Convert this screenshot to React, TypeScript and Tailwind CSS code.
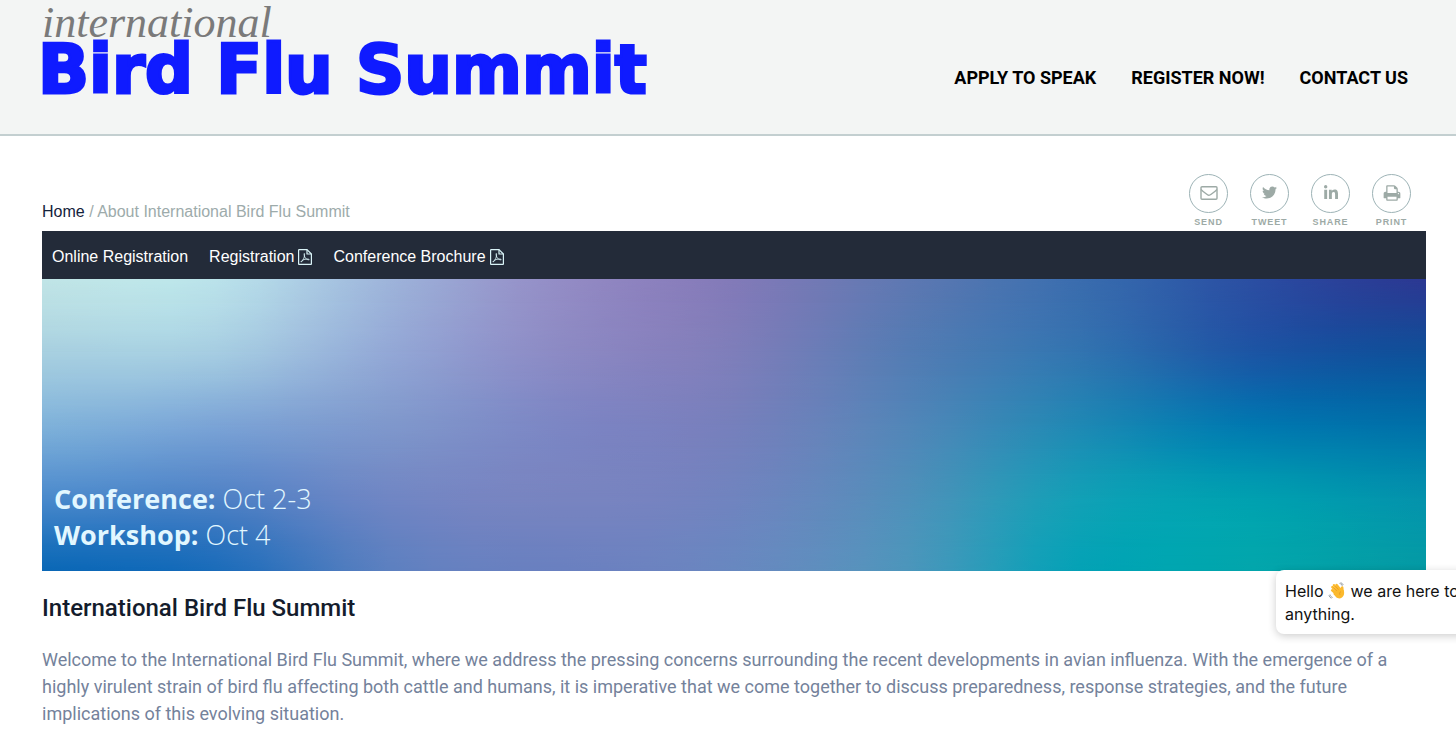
import type { ReactNode } from 'react';
import { FaLinkedinIn, FaTwitter } from 'react-icons/fa';

const navLinks = ['Apply to speak', 'Register now!', 'Contact us'];

const documents = [
  { label: 'Online Registration', pdf: false },
  { label: 'Registration', pdf: true },
  { label: 'Conference Brochure', pdf: true },
];

// Colours of the banner on an even grid
const bannerMesh = [
  ['#c0e4e6', '#bae2ea', '#9eb4da', '#938cc5', '#827ab8', '#5e78b2', '#3a6cae', '#2b4ea2', '#2c3892'],
  ['#a8d0e0', '#a6cde2', '#93a8d6', '#8c8ac4', '#7e7eba', '#547cb4', '#3274b0', '#1c55a4', '#0f5099'],
  ['#7fb2da', '#7ba4d6', '#7f98cc', '#7c86c4', '#7680bc', '#5286b8', '#1f88b4', '#0078b0', '#0070a8'],
  ['#4a8acc', '#4e82c6', '#7086c4', '#7884c0', '#7084bf', '#4f90ba', '#12a0b6', '#00a0b0', '#0492ac'],
  ['#0a68b6', '#1a6cba', '#5c80c0', '#6a80c0', '#6888c0', '#4c96bc', '#04a2b6', '#03a6ac', '#049aa4'],
];

type Rgb = number[];

function toRgb(hex: string): Rgb {
  return [1, 3, 5].map((i) => parseInt(hex.slice(i, i + 2), 16));
}

// Catmull-Rom through a list of colours, so the gradient shows no creases
function smooth(colors: Rgb[], steps: number): Rgb[] {
  const at = (i: number) => colors[Math.max(0, Math.min(colors.length - 1, i))];
  const out: Rgb[] = [];
  for (let i = 0; i < colors.length - 1; i++) {
    for (let s = 0; s < steps; s++) {
      const t = s / steps;
      out.push(
        [0, 1, 2].map((c) => {
          const [a, b, d, e] = [at(i - 1)[c], at(i)[c], at(i + 1)[c], at(i + 2)[c]];
          return (
            0.5 * (2 * b + (d - a) * t + (2 * a - 5 * b + 4 * d - e) * t * t + (3 * b - a - 3 * d + e) * t * t * t)
          );
        }),
      );
    }
  }
  out.push(colors[colors.length - 1]);
  return out;
}

const wideRows = bannerMesh.map((row) => smooth(row.map(toRgb), 4));
const columns = wideRows[0].map((_, x) => smooth(wideRows.map((row) => row[x]), 3));
const meshRows = columns[0].map((_, y) =>
  columns.map((col) => `rgb(${col[y].map((v) => Math.max(0, Math.round(v))).join(',')})`),
);

function BannerArt() {
  const last = meshRows.length - 1;
  return (
    <svg
      aria-hidden="true"
      className="absolute inset-0 h-full w-full"
      viewBox="0 0 100 100"
      preserveAspectRatio="none"
    >
      <defs>
        {meshRows.map((row, i) => (
          <linearGradient key={i} id={`row-${i}`}>
            {row.map((color, j) => (
              <stop key={j} offset={j / (row.length - 1)} stopColor={color} />
            ))}
          </linearGradient>
        ))}
        {meshRows.slice(0, last).map((_, i) => (
          <linearGradient key={i} id={`fade-${i}`} x1="0" y1="0" x2="0" y2="1">
            <stop offset={i / last} stopColor="#fff" />
            <stop offset={(i + 1) / last} stopColor="#fff" stopOpacity="0" />
          </linearGradient>
        ))}
        {meshRows.slice(0, last).map((_, i) => (
          <mask key={i} id={`mask-${i}`}>
            <rect width="100" height="100" fill={`url(#fade-${i})`} />
          </mask>
        ))}
      </defs>
      {meshRows
        .map((_, i) => (
          <rect
            key={i}
            width="100"
            height="100"
            fill={`url(#row-${i})`}
            mask={i < last ? `url(#mask-${i})` : undefined}
          />
        ))
        .reverse()}
    </svg>
  );
}

function EnvelopeIcon() {
  return (
    <svg viewBox="0 0 18 16" className="h-4 w-[18px]" fill="none" stroke="currentColor" strokeWidth="1.4">
      <rect x="1" y="1.700" width="16" height="12.600" rx="1" />
      <path d="M1 4.500c2 2 4 3.300 6.200 5 1.200.9 2.400.9 3.600 0C13 7.800 15 6.500 17 4.500" />
    </svg>
  );
}

function PrintIcon() {
  return (
    <svg viewBox="0 0 1792 1792" className="h-[18px] w-[18px]" fill="currentColor">
      <path d="M448 1536h896v-256h-896v256zm0-640h896v-384h-160q-40 0-68-28t-28-68v-160h-640v640zm1152 64q0-26-19-45t-45-19-45 19-19 45 19 45 45 19 45-19 19-45zm128 0v416q0 13-9.500 22.500t-22.500 9.500h-224v160q0 40-28 68t-68 28h-960q-40 0-68-28t-28-68v-160h-224q-13 0-22.500-9.500t-9.500-22.500v-416q0-79 56.500-135.500t135.500-56.500h64v-544q0-40 28-68t68-28h672q40 0 88 20t76 48l152 152q28 28 48 76t20 88v256h64q79 0 135.500 56.500t56.500 135.500z" />
    </svg>
  );
}

function PdfIcon() {
  return (
    <svg
      aria-hidden="true"
      viewBox="0 0 14 16"
      className="h-4 w-3.5 text-[#d9f3f7]"
      fill="none"
      stroke="currentColor"
      strokeWidth="1.2"
      strokeLinejoin="round"
    >
      <path d="M.6 1.200v13.600a.6.6 0 0 0 .6.6h11.600a.6.6 0 0 0 .6-.6V5L9 .6H1.200a.6.6 0 0 0-.6.6z" />
      <path d="M9 .6V5h4.400" />
      <path d="M6.300 4.500c-.5 1.500.2 3.500 1.300 4.800 1 1.100 2.300 1.600 3.600 1.500.4-.8-2.500-1-4.300-.5-1.600.4-3.600 1.300-4 2.600.9.300 2-1.700 2.700-3.200.8-1.800 1.300-4 .7-5.200z" strokeWidth=".9" />
    </svg>
  );
}

function WavingHand() {
  return (
    <svg role="img" aria-label="waving hand" viewBox="0 0 18 18" className="inline-block h-[18px] w-[18px] align-[-3px]">
      <g stroke="#fbb92d" strokeLinecap="round" strokeWidth="2.500" fill="none">
        <path d="M9.500 10L4.400 5.200" />
        <path d="M11 9L6 3.300" />
        <path d="M12.500 8L8.600 3" />
        <path d="M8.500 12L4.200 8.300" />
        <path d="M14.600 10.500L14.200 5.500" />
      </g>
      <path d="M6.500 9.800l6-4.200 1.300 2.200 1.900.2c.9 3 .6 5.800-1.700 7.500-2 1.500-4.300 1.200-6-.5L5.300 12z" fill="#fbb92d" />
      <path d="M9 8.800L5.500 5.500M10.600 7.700L7.300 4M12 13c-.8-1.500-.3-2.800 1-3.600" stroke="#e08f1c" strokeWidth=".6" fill="none" />
      <path d="M11.500 1.400c1.400.3 2.400 1.200 2.800 2.500M12.600.6c1.300.4 2.200 1.300 2.700 2.400M2 12.500c.3 1.500 1.200 2.500 2.600 3M.9 13.200c.4 1.500 1.300 2.500 2.500 3.100" stroke="#8d959b" strokeWidth=".9" fill="none" />
    </svg>
  );
}

function ShareButton({ label, children }: { label: string; children: ReactNode }) {
  return (
    <button type="button" className="flex w-[39px] flex-col items-center gap-1 text-[#9daaa6]">
      <span className="flex h-[39px] w-[39px] items-center justify-center rounded-full border border-[#9db3b6] pb-0.5">
        {children}
      </span>
      <span className="text-[9px] leading-[11px] font-bold tracking-widest uppercase">{label}</span>
    </button>
  );
}

export default function App() {
  return (
    <div className="relative min-h-screen overflow-hidden bg-white font-['Liberation_Sans',sans-serif]">
      <header className="border-b-2 border-[#c3cfd0] bg-[#f3f5f4]">
        <div className="flex items-start justify-between pt-1.5 pr-12 pb-[34px] pl-[42px]">
          <a href="#" className="block">
            <span className="block font-['Liberation_Serif',serif] text-[44px] leading-[34px] text-[#7a7a7a] italic">
              international
            </span>
            <span className="-ml-1 block font-['DejaVu_Sans',sans-serif] text-[67px] leading-[60px] font-bold text-[#0f1bff] [-webkit-text-stroke:3px_#0f1bff]">
              Bird Flu Summit
            </span>
          </a>
          <nav className="flex gap-[35px] pt-[60px] font-['Roboto',sans-serif] text-lg leading-6 font-bold text-black uppercase">
            {navLinks.map((link) => (
              <a key={link} href="#">{link}</a>
            ))}
          </nav>
        </div>
      </header>

      <main className="pt-[38px] pr-[30px] pl-[42px]">
        <div className="flex items-end justify-between pr-[15px] pb-[3px]">
          <p className="pb-1 text-base text-[#9dabab]">
            <a href="#" className="text-[#14233c]">Home</a> / About International Bird Flu Summit
          </p>
          <div className="flex gap-[22px]">
            <ShareButton label="Send"><EnvelopeIcon /></ShareButton>
            <ShareButton label="Tweet"><FaTwitter size={15} /></ShareButton>
            <ShareButton label="Share"><FaLinkedinIn size={16} /></ShareButton>
            <ShareButton label="Print"><PrintIcon /></ShareButton>
          </div>
        </div>

        <nav className="flex h-12 items-center gap-[21px] bg-[#232b39] px-2.5 pt-1 text-base text-white">
          {documents.map((doc) => (
            <a key={doc.label} href="#" className="flex items-center gap-1">
              {doc.label}
              {doc.pdf && <PdfIcon />}
            </a>
          ))}
        </nav>

        <section className="relative flex h-[292px] items-end">
          <BannerArt />
          <div className="relative px-3 pb-[18px] font-['Open_Sans',sans-serif] text-[27px] leading-9 font-light text-[#e2f7ff]">
            <p><b className="font-bold">Conference:</b> Oct 2-3</p>
            <p><b className="font-bold">Workshop:</b> Oct 4</p>
          </div>
        </section>

        <article className="pt-[21px] font-['Roboto',sans-serif]">
          <h1 className="text-2xl font-medium text-[#141c2c]">International Bird Flu Summit</h1>
          <p className="mt-[22px] text-lg leading-[27px] text-[#74829b]">
            Welcome to the International Bird Flu Summit, where we address the pressing concerns surrounding the recent
            developments in avian influenza. With the emergence of a highly virulent strain of bird flu affecting both
            cattle and humans, it is imperative that we come together to discuss preparedness, response strategies, and
            the future implications of this evolving situation.
          </p>
        </article>
      </main>

      {/* Chat prompt, runs off the right edge */}
      <aside className="absolute top-[570px] -right-10 w-[220px] rounded-lg bg-white px-[9px] pt-[10px] pb-2 font-['Inter',sans-serif] text-base leading-[23px] whitespace-nowrap text-[#111] shadow-[0_2px_8px_rgba(0,0,0,0.2)]">
        Hello <WavingHand /> we are here to
        <br />
        anything.
      </aside>
    </div>
  );
}
